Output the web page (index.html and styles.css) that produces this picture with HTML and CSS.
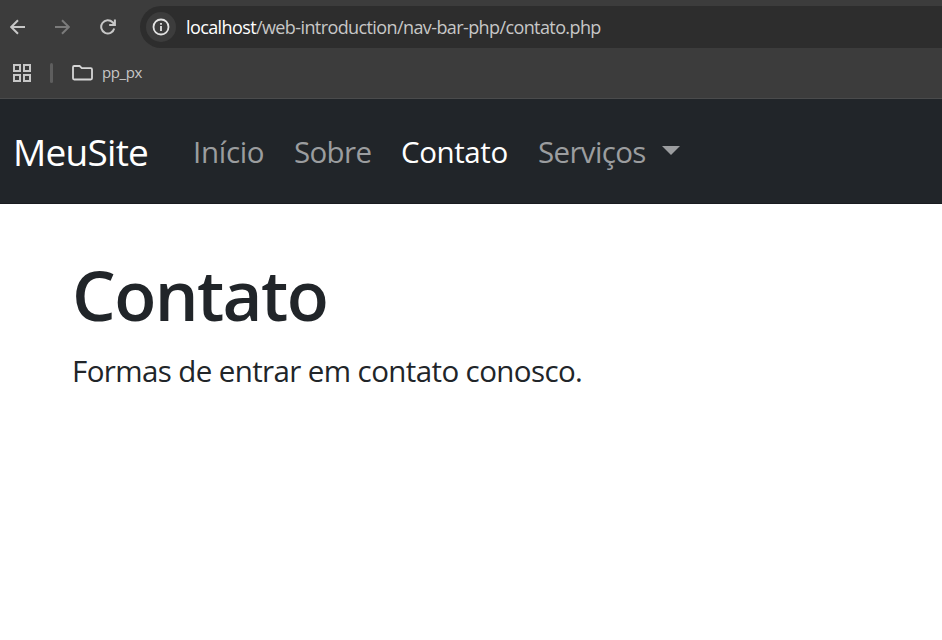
FILE: index.html
```html
<!DOCTYPE html>
<html lang="pt-BR">
<head>
<meta charset="utf-8">
<title>Contato</title>
<link rel="stylesheet" href="styles.css">
</head>
<body>
<header class="browser">
  <div class="toolbar">
    <svg class="icon back" viewBox="0 0 16 16"><path d="M15 8H1.5M8 1.2 1.2 8 8 14.8"/></svg>
    <svg class="icon forward" viewBox="0 0 16 16"><path d="M1 8h13.5M8 1.2 14.8 8 8 14.8"/></svg>
    <svg class="icon reload" viewBox="0 0 16 16"><path d="M14.2 9.5A6.6 6.6 0 1 1 12.6 3.3L14.4 5.2M14.9.5V6H9.2"/></svg>
    <div class="address">
      <span class="info"><svg viewBox="0 0 18 18"><circle cx="9" cy="9" r="7.5"/><path d="M9 8v5M9 5v1.8"/></svg></span>
      <span class="url"><b>localhost</b>/web-introduction/nav-bar-php/contato.php</span>
    </div>
  </div>
  <div class="bookmarks">
    <svg class="apps" viewBox="0 0 18 18"><path d="M1 1h6v6H1zM11 1h6v6h-6zM1 11h6v6H1zM11 11h6v6h-6z"/></svg>
    <span class="divider"></span>
    <svg class="folder" viewBox="0 0 21 16"><path d="M1 2.2Q1 1 2.2 1H7.6L9.8 3.2H18.8Q20 3.2 20 4.4V13.3Q20 14.5 18.8 14.5H2.2Q1 14.5 1 13.3Z"/></svg>
    <span class="bookmark">pp_px</span>
  </div>
</header>
<nav class="navbar">
  <a class="brand">MeuSite</a>
  <a class="link inicio">Início</a>
  <a class="link sobre">Sobre</a>
  <a class="link contato active">Contato</a>
  <a class="link servicos">Serviços</a>
  <span class="caret"></span>
</nav>
<main class="content">
  <h1>Contato</h1>
  <p>Formas de entrar em contato conosco.</p>
</main>
</body>
</html>
```
FILE: styles.css
```css
* { box-sizing: border-box; }
body { margin: 0; background: #fff; color: #212529; font-family: "Segoe UI", "Open Sans", "Noto Sans", sans-serif; white-space: nowrap; overflow: hidden; }
svg { display: block; fill: none; flex: none; }
.browser { height: 99px; background: #3c3c3c; border-bottom: 1px solid #4a4b4c; }
.toolbar { height: 54px; padding-left: 10px; display: flex; align-items: center; }
.icon { width: 16px; height: 16px; stroke: #c7c7c7; stroke-width: 2; }
.forward { margin-left: 28px; stroke: #7b7b7b; }
.reload { margin-left: 30px; }
.address { flex: 1; height: 42px; margin-left: 24px; padding-left: 6px; display: flex; align-items: center; background: #2d2d2d; border-radius: 21px 0 0 21px; }
.info { width: 30px; height: 30px; border-radius: 50%; background: #3c3c3c; display: flex; align-items: center; justify-content: center; }
.info svg { width: 18px; height: 18px; stroke: #e3e3e3; stroke-width: 1.8; }
.url { margin-left: 10px; font-size: 18px; line-height: 24px; letter-spacing: -0.6px; color: #c7c7c7; }
.url b { font-weight: 400; color: #fff; }
.bookmarks { height: 38px; padding-left: 13px; display: flex; align-items: center; }
.apps { width: 18px; height: 18px; stroke: #c7c7c7; stroke-width: 2; }
.divider { width: 3px; height: 20px; margin-left: 19px; border-radius: 2px; background: #5e5e5e; }
.folder { width: 21px; height: 16px; margin-left: 19px; stroke: #d6d6d6; stroke-width: 1.8; }
.bookmark { margin: 0 0 2px 9px; font-size: 15px; line-height: 20px; letter-spacing: -0.4px; color: #c7c7c7; }
.navbar { height: 105px; padding: 0 0 0 13px; display: flex; align-items: center; background: #212529; border-bottom: 1px solid #191c20; }
.brand { width: 180px; font-size: 37px; color: #fff; letter-spacing: -0.75px; }
.link { font-size: 29.5px; color: #9b9d9f; }
.inicio { width: 101px; letter-spacing: -0.3px; }
.sobre { width: 107px; letter-spacing: -0.65px; }
.contato { width: 137px; letter-spacing: -0.4px; }
.servicos { width: 124px; letter-spacing: -0.65px; }
.link.active { color: #fff; }
.caret { border: 9px solid transparent; border-top-color: #9b9d9f; border-bottom: 0; margin-bottom: 1px; }
.content { padding: 45px 72px 0; }
h1 { margin: 0; font-size: 69px; line-height: 90px; font-weight: 600; letter-spacing: -1.6px; }
p { margin: 9px 0 0; font-size: 29.5px; line-height: 45px; letter-spacing: -0.6px; }
```
